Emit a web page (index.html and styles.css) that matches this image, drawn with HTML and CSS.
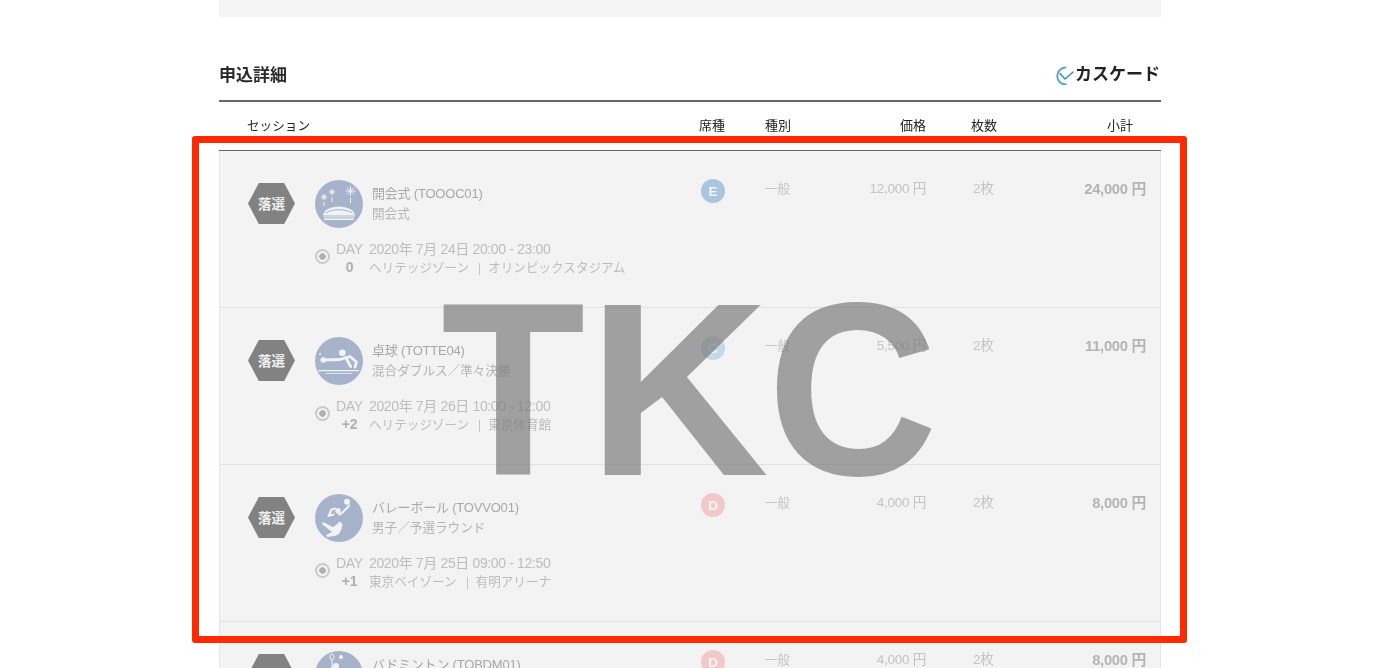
FILE: index.html
```html
<!DOCTYPE html>
<html lang="ja">
<head>
<meta charset="utf-8">
<title>申込詳細</title>
<link rel="stylesheet" href="styles.css">
</head>
<body>
<div class="page">
  <div class="top-block"></div>
  <div class="title-row">
    <h2 class="title">申込詳細</h2>
    <div class="cascade">
      <svg class="cascade-icon" viewBox="0 0 20 20"><path class="ci-arc" d="M10.500 2.500A8.500 8.500 0 1 0 11 19.500"/><path class="ci-check" d="M5 8.500l5 5.500 8-7"/></svg>
      <span>カスケード</span>
    </div>
  </div>
  <div class="grid head">
    <div class="h-session">セッション</div>
    <div>席種</div>
    <div>種別</div>
    <div class="right">価格</div>
    <div class="h-count">枚数</div>
    <div class="right h-sub">小計</div>
  </div>
  <div class="rows">
    <div class="grid row">
      <div class="session">
        <div class="hex">落選</div>
        <div class="info">
          <div class="event">
            <svg class="pict" viewBox="0 0 48 48"><circle class="disc" cx="24" cy="24" r="24"/>
              <g class="ln"><path d="M9 14v6M6 17h6M7 15l4 4M11 15l-4 4"/><path d="M17 9v6M14 12h6M15 10l4 4M19 10l-4 4"/><path d="M35.500 6v10M30.500 11h10M32 7.500l7 7M39 7.500l-7 7"/><path d="M9 22v4M17 17v5M35.500 18v5"/></g>
              <path class="wh" d="M8 36c0-6 8-9.500 16-9.500s16 3.500 16 9.500c0 1-1 1.500-2 1.500H10c-1 0-2-.5-2-1.500z"/>
              <path class="wh" d="M9 38.500h30v1.500H9z"/>
              <path class="gap" d="M10.500 33c3-2 8-3.300 13.500-3.300s10.500 1.300 13.500 3.300M8 36h32"/>
            </svg>
            <div class="names"><div class="name">開会式 (TOOOC01)</div><div class="sub">開会式</div></div>
          </div>
          <div class="detail">
            <span class="radio"></span>
            <div class="day"><div>DAY</div><div class="day-n">0</div></div>
            <div class="when"><div>2020年 7月 24日 20:00 - 23:00</div><div class="place"><span>ヘリテッジゾーン</span><i class="sep"></i><span>オリンピックスタジアム</span></div></div>
          </div>
        </div>
      </div>
      <div><span class="seat seat-e">E</span></div>
      <div class="cell kind">一般</div>
      <div class="cell right">12,000 円</div>
      <div class="cell count">2枚</div>
      <div class="cell total right">24,000 円</div>
    </div>
    <div class="grid row">
      <div class="session">
        <div class="hex">落選</div>
        <div class="info">
          <div class="event">
            <svg class="pict" viewBox="0 0 48 48"><circle class="disc" cx="24" cy="24" r="24"/>
              <circle class="wh" cx="27.300" cy="15.700" r="3.300"/><circle class="wh" cx="5" cy="17" r="0.900"/><circle class="wh" cx="8.300" cy="23" r="2.800"/>
              <path class="lnb" d="M9 23l16-.5 10-3 6.500 5.500-1.500 5"/><path class="lnb" d="M31 21l4.700 8.500"/><path class="lnm" d="M3.500 33.700h40"/><path class="lnt" d="M11 36.500h26"/>
            </svg>
            <div class="names"><div class="name">卓球 (TOTTE04)</div><div class="sub">混合ダブルス／準々決勝</div></div>
          </div>
          <div class="detail">
            <span class="radio"></span>
            <div class="day"><div>DAY</div><div class="day-n">+2</div></div>
            <div class="when"><div>2020年 7月 26日 10:00 - 12:00</div><div class="place"><span>ヘリテッジゾーン</span><i class="sep"></i><span>東京体育館</span></div></div>
          </div>
        </div>
      </div>
      <div><span class="seat seat-c">C</span></div>
      <div class="cell kind">一般</div>
      <div class="cell right">5,500 円</div>
      <div class="cell count">2枚</div>
      <div class="cell total right">11,000 円</div>
    </div>
    <div class="grid row">
      <div class="session">
        <div class="hex">落選</div>
        <div class="info">
          <div class="event">
            <svg class="pict" viewBox="0 0 48 48"><circle class="disc" cx="24" cy="24" r="24"/>
              <circle class="wh" cx="32" cy="7.700" r="3"/><circle class="wh" cx="23" cy="16.700" r="2.700"/>
              <path class="lnc" d="M34.300 11.500l-7.300 7.500-3 1.500"/><path class="lnc" d="M20 14.500l-3.500 1-3 6.500 5-1.500"/>
              <path class="wh" d="M24 28c3 0 4 2 3 5-1 5-4 9-8 9l-7 1-1-2 6-3-10-8 1-2 10 5c2-1 4-3 6-5z"/>
            </svg>
            <div class="names"><div class="name">バレーボール (TOVVO01)</div><div class="sub">男子／予選ラウンド</div></div>
          </div>
          <div class="detail">
            <span class="radio"></span>
            <div class="day"><div>DAY</div><div class="day-n">+1</div></div>
            <div class="when"><div>2020年 7月 25日 09:00 - 12:50</div><div class="place"><span>東京ベイゾーン</span><i class="sep"></i><span>有明アリーナ</span></div></div>
          </div>
        </div>
      </div>
      <div><span class="seat seat-d">D</span></div>
      <div class="cell kind">一般</div>
      <div class="cell right">4,000 円</div>
      <div class="cell count">2枚</div>
      <div class="cell total right">8,000 円</div>
    </div>
    <div class="grid row">
      <div class="session">
        <div class="hex">落選</div>
        <div class="info">
          <div class="event">
            <svg class="pict" viewBox="0 0 48 48"><circle class="disc" cx="24" cy="24" r="24"/>
              <ellipse class="ln" cx="17" cy="6" rx="2" ry="3"/><path class="ln" d="M17 9v7"/><circle class="wh" cx="26" cy="6" r="2"/><circle class="wh" cx="21" cy="15" r="3"/>
              <path class="lnc" d="M17 16l4 7 10-5M21 23l1 9"/>
            </svg>
            <div class="names"><div class="name">バドミントン (TOBDM01)</div></div>
          </div>
        </div>
      </div>
      <div><span class="seat seat-d">D</span></div>
      <div class="cell kind">一般</div>
      <div class="cell right">4,000 円</div>
      <div class="cell count">2枚</div>
      <div class="cell total right">8,000 円</div>
    </div>
  </div>
</div>
<div class="stamp">T<span class="stamp-k">K</span>C</div>
<div class="frame"></div>
</body>
</html>
```
FILE: styles.css
```css
html, body {
  margin: 0;
  height: 668px;
  overflow: hidden;
  background: #fff;
}
body {
  position: relative;
  font-family: "Liberation Sans", "Noto Sans CJK JP", sans-serif;
  color: #222;
}
.page {
  width: 942px;
  margin-left: 219px;
  filter: blur(0.45px);
}
.top-block {
  height: 17px;
  background: #f5f5f5;
}
.title-row {
  height: 83px;
  border-bottom: 2px solid #666;
  display: flex;
  justify-content: space-between;
  align-items: flex-start;
}
.title {
  margin: 48px 0 0;
  font-size: 17px;
  line-height: 22px;
  font-weight: 700;
  color: #2a2a2a;
}
.cascade {
  margin: 46px 1px 0 0;
  display: flex;
  align-items: center;
  font-size: 17px;
  line-height: 24px;
  font-weight: 700;
  color: #222;
}
.cascade-icon {
  width: 20px;
  height: 20px;
  flex: none;
  margin-top: -1px;
}
.ci-arc, .ci-check {
  fill: none;
  stroke-linecap: round;
  stroke-linejoin: round;
}
.ci-arc {
  stroke: #5ba3d4;
  stroke-width: 2;
}
.ci-check {
  stroke: #3f8fc8;
  stroke-width: 1.600;
}
.grid {
  display: grid;
  grid-template-columns: 480px 66px 65px 96px 125px 110px;
}
.head {
  border-bottom: 1px solid #666;
  box-sizing: border-box;
  height: 49px;
  font-size: 13px;
  line-height: 18px;
  padding-top: 15px;
  color: #222;
}
.h-session {
  padding-left: 28px;
  font-size: 12.600px;
}
.h-count { padding-left: 45px; }
.h-sub { padding-right: 28px; }
.right { text-align: right; }
.row {
  box-sizing: border-box;
  height: 157px;
  grid-template-columns: 479px 66px 65px 96px 125px 109px;
  background: #f4f3f3;
  border: 1px solid #e6e6e6;
  border-width: 0 1px 1px;
  border-bottom-color: #e2e2e2;
  padding-top: 28px;
}
.session {
  display: flex;
  align-items: flex-start;
  padding-left: 28px;
}
.hex {
  width: 47px;
  height: 41px;
  margin: 4px 20px 0 0;
  padding-bottom: 1px;
  box-sizing: border-box;
  flex: none;
  display: flex;
  align-items: center;
  justify-content: center;
  background: #828282;
  clip-path: polygon(0 50%, 23% 0, 77% 0, 100% 50%, 77% 100%, 23% 100%);
  color: #eee;
  font-size: 13.500px;
  font-weight: 700;
}
.info { flex: 1; }
.event {
  display: flex;
  align-items: flex-start;
  padding-top: 1px;
}
.pict {
  width: 48px;
  height: 48px;
  flex: none;
  margin-right: 9px;
}
.disc { fill: #a6b3ca; }
.wh { fill: #f2f3f6; }
.ln, .ln path {
  fill: none;
  stroke: #f2f3f6;
  stroke-width: 1;
}
.lnb, .lnc, .lnm, .lnt {
  fill: none;
  stroke: #f2f3f6;
  stroke-linecap: round;
  stroke-linejoin: round;
}
.lnb { stroke-width: 2.800; }
.lnc { stroke-width: 2; }
.lnm { stroke-width: 1.200; }
.lnt { stroke-width: 0.800; }
.gap {
  fill: none;
  stroke: #a6b3ca;
  stroke-width: 1;
}
.names { padding-top: 4px; }
.name {
  line-height: 20px;
  font-size: 13px;
  letter-spacing: -0.200px;
  color: #a8a8a8;
}
.sub {
  line-height: 20px;
  font-size: 12.600px;
  color: #b5b5b5;
}
.detail {
  display: flex;
  align-items: flex-start;
  margin-top: 12px;
  color: #bdbdbd;
  font-size: 14px;
  line-height: 18px;
}
.radio {
  box-sizing: border-box;
  width: 15px;
  height: 15px;
  margin: 9px 6px 0 0;
  border-radius: 50%;
  flex: none;
  border: 2px solid #cacaca;
  background: radial-gradient(circle, #b0b0b0 0 3px, transparent 3.500px);
}
.day {
  width: 27px;
  margin-right: 6px;
  text-align: center;
  letter-spacing: -0.300px;
}
.day-n {
  font-weight: 700;
  color: #b0b0b0;
  font-size: 14px;
}
.when { letter-spacing: -0.360px; }
.place {
  display: flex;
  align-items: center;
  margin-top: 1px;
  font-size: 12.600px;
  letter-spacing: 0;
}
.sep {
  width: 1px;
  height: 12px;
  margin: 2px 8px 0 10px;
  background: #c4c4c4;
}
.seat {
  display: flex;
  width: 24px;
  height: 24px;
  margin: 0 0 0 2px;
  align-items: center;
  justify-content: center;
  border-radius: 50%;
  color: #f4f4f4;
  font-size: 13.500px;
  font-weight: 700;
}
.seat-e { background: #aac5e0; }
.seat-c { background: #c4dae8; }
.seat-d { background: #f3c8c8; }
.cell {
  font-size: 13.600px;
  line-height: 18px;
  padding-top: 1px;
  color: #c4c4c4;
  letter-spacing: -0.300px;
}
.kind {
  font-size: 12.600px;
  letter-spacing: 0;
}
.count { padding-left: 47px; }
.total {
  padding-right: 14px;
  font-size: 14.800px;
  font-weight: 700;
  color: #b4b4b4;
}
.stamp {
  position: absolute;
  left: 441px;
  top: 267px;
  font-size: 246px;
  line-height: 1;
  font-weight: 700;
  font-family: "Liberation Sans", sans-serif;
  color: rgba(124, 124, 124, 0.7);
  letter-spacing: 3px;
  white-space: nowrap;
  transform: scaleX(0.96);
  transform-origin: left top;
}
.stamp-k {
  display: inline-block;
  letter-spacing: 9px;
  transform: scaleX(1.06);
  transform-origin: left top;
}
.frame {
  position: absolute;
  box-sizing: border-box;
  left: 192px;
  top: 136px;
  width: 995px;
  height: 507px;
  border: 7px solid #ff2a00;
  border-radius: 3px;
}
```
